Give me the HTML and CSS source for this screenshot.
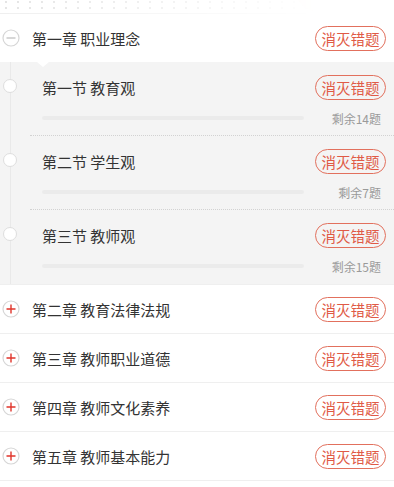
FILE: index.html
```html
<!DOCTYPE html>
<html lang="zh-CN">
<head>
<meta charset="utf-8">
<title>章节</title>
<link rel="stylesheet" href="styles.css">
</head>
<body>
<div class="top"><span class="sun"></span></div>
<ul class="chapters">
  <li class="chapter open">
    <div class="chapter-head">
      <svg class="toggle" viewBox="0 0 18 18" width="18" height="18"><circle cx="9" cy="9" r="8" fill="#fff" stroke="#d6d6d6" stroke-width="1.2"/><line x1="4.5" y1="9" x2="13.5" y2="9" stroke="#bdbdbd" stroke-width="1.2"/></svg>
      <span class="title">第一章 职业理念</span>
      <button class="kill">消灭错题</button>
    </div>
    <div class="sections">
      <span class="notch"></span>
      <div class="section">
        <span class="dot"></span>
        <div class="body">
          <div class="row"><span class="title">第一节 教育观</span><button class="kill">消灭错题</button></div>
          <div class="row meta"><span class="bar"></span><span class="left">剩余14题</span></div>
        </div>
      </div>
      <div class="section">
        <span class="dot"></span>
        <div class="body">
          <div class="row"><span class="title">第二节 学生观</span><button class="kill">消灭错题</button></div>
          <div class="row meta"><span class="bar"></span><span class="left">剩余7题</span></div>
        </div>
      </div>
      <div class="section last">
        <span class="dot"></span>
        <div class="body">
          <div class="row"><span class="title">第三节 教师观</span><button class="kill">消灭错题</button></div>
          <div class="row meta"><span class="bar"></span><span class="left">剩余15题</span></div>
        </div>
      </div>
    </div>
  </li>
  <li class="chapter">
    <div class="chapter-head">
      <svg class="toggle" viewBox="0 0 18 18" width="18" height="18"><circle cx="9" cy="9" r="8" fill="#fff" stroke="#d6d6d6" stroke-width="1.2"/><path d="M4.5 9H13.5M9 4.5V13.5" stroke="#e0352b" stroke-width="1.4"/></svg>
      <span class="title">第二章 教育法律法规</span>
      <button class="kill">消灭错题</button>
    </div>
  </li>
  <li class="chapter">
    <div class="chapter-head">
      <svg class="toggle" viewBox="0 0 18 18" width="18" height="18"><circle cx="9" cy="9" r="8" fill="#fff" stroke="#d6d6d6" stroke-width="1.2"/><path d="M4.5 9H13.5M9 4.5V13.5" stroke="#e0352b" stroke-width="1.4"/></svg>
      <span class="title">第三章 教师职业道德</span>
      <button class="kill">消灭错题</button>
    </div>
  </li>
  <li class="chapter">
    <div class="chapter-head">
      <svg class="toggle" viewBox="0 0 18 18" width="18" height="18"><circle cx="9" cy="9" r="8" fill="#fff" stroke="#d6d6d6" stroke-width="1.2"/><path d="M4.5 9H13.5M9 4.5V13.5" stroke="#e0352b" stroke-width="1.4"/></svg>
      <span class="title">第四章 教师文化素养</span>
      <button class="kill">消灭错题</button>
    </div>
  </li>
  <li class="chapter">
    <div class="chapter-head">
      <svg class="toggle" viewBox="0 0 18 18" width="18" height="18"><circle cx="9" cy="9" r="8" fill="#fff" stroke="#d6d6d6" stroke-width="1.2"/><path d="M4.5 9H13.5M9 4.5V13.5" stroke="#e0352b" stroke-width="1.4"/></svg>
      <span class="title">第五章 教师基本能力</span>
      <button class="kill">消灭错题</button>
    </div>
  </li>
</ul>
</body>
</html>
```
FILE: styles.css
```css
* { box-sizing: border-box; }
html, body { margin: 0; padding: 0; background: #fff; }
body {
  width: 394px;
  height: 487px;
  overflow: hidden;
  font-family: "Noto Sans CJK SC", "Noto Sans", sans-serif;
  color: #333;
}
.top {
  position: relative;
  height: 14px;
  border-bottom: 1px solid #efefef;
  overflow: hidden;
  background-image: radial-gradient(circle, #e4e4e4 1px, transparent 1.4px);
  background-size: 12px 6px;
  background-position: 0 -1px;
  -webkit-mask-image: linear-gradient(90deg, #000 0, rgba(0,0,0,0.5) 40%, transparent 80%);
}
.sun {
  position: absolute;
  left: 296px;
  top: -29px;
  width: 40px;
  height: 40px;
  border-radius: 50%;
  background: #fdeedd;
}
.chapters { list-style: none; margin: 0; padding: 0; }
.chapter { border-bottom: 1px solid #efefef; }
.chapter-head {
  display: flex;
  align-items: center;
  height: 48px;
  padding: 0 8px 0 2px;
}
.chapter.open .chapter-head { height: 48px; }
.toggle { flex: none; display: block; }
.chapter-head .title {
  margin-left: 12px;
  font-size: 15px;
  flex: 1;
  letter-spacing: 0;
}
.kill {
  flex: none;
  height: 25px;
  width: 71px;
  padding: 0;
  border: 1.5px solid #e2705d;
  border-radius: 13px;
  background: transparent;
  color: #e05a46;
  font-family: inherit;
  font-size: 14.5px;
  line-height: 21px;
  text-align: center;
}
.sections {
  position: relative;
  background: #f4f4f4 linear-gradient(#e9e9e9, #e9e9e9) no-repeat 10px 0 / 1px 100%;
}
.notch {
  position: absolute;
  left: 37px;
  top: 0;
  width: 0;
  height: 0;
  border-left: 6px solid transparent;
  border-right: 6px solid transparent;
  border-top: 5px solid #fff;
}
.section {
  display: flex;
  height: 74px;
}
.dot {
  flex: none;
  width: 14px;
  height: 14px;
  margin: 17px 13px 0 3px;
  border-radius: 50%;
  background: #fff;
  border: 1px solid #dedede;
}
.body {
  flex: 1;
  border-bottom: 1px dotted #d2d2d2;
  padding: 13px 8px 0 12px;
}
.section.last .body { border-bottom: none; }
.row { display: flex; align-items: center; }
.row .title { flex: 1; font-size: 15px; }
.meta { margin-top: 12px; height: 12px; padding-right: 5px; }
.bar {
  width: 262px;
  height: 4px;
  border-radius: 2px;
  background: #ebebeb;
}
.left {
  margin-left: auto;
  font-size: 12px;
  color: #9a9a9a;
}
```
